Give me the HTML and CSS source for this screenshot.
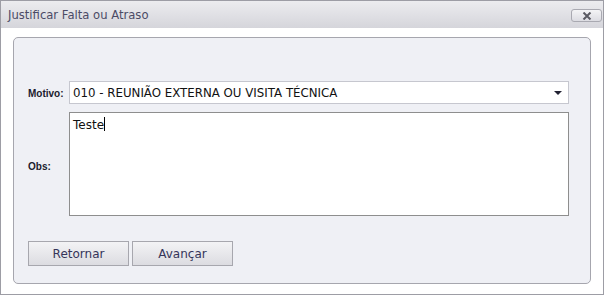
FILE: index.html
```html
<!DOCTYPE html>
<html lang="pt">
<head>
  <meta charset="UTF-8">
  <title>Justificar Falta ou Atraso</title>
  <link rel="stylesheet" href="styles.css">
</head>
<body>
  <div class="window">
    <div class="title-bar">
      <span class="title">Justificar Falta ou Atraso</span>
      <button class="close-btn" title="Fechar">
        <svg width="10" height="8" viewBox="0 0 10 8">
          <path d="M1.5 0.5 L8.5 7.5 M8.5 0.5 L1.5 7.5" stroke="#5a5a62" stroke-width="2" fill="none"/>
        </svg>
      </button>
    </div>

    <div class="window-body">
      <div class="panel">
        <div class="form">
          <label class="field-label">Motivo:</label>
          <div class="combo">
            <span class="combo-text">010 - REUNIÃO EXTERNA OU VISITA TÉCNICA</span>
            <span class="combo-arrow"></span>
          </div>

          <label class="field-label obs-label">Obs:</label>
          <div class="memo">Teste<span class="caret"></span></div>
        </div>

        <div class="actions">
          <button class="btn">Retornar</button>
          <button class="btn">Avançar</button>
        </div>
      </div>
    </div>
  </div>
</body>
</html>
```

FILE: styles.css
```css
body {
  margin: 0;
  padding: 0;
  background-color: #ffffff;
  font-family: 'DejaVu Sans', Verdana, sans-serif;
}

.window {
  width: 604px;
  height: 295px;
  box-sizing: border-box;
  border: 1px solid #9d9da5;
  background-color: #ffffff;
  display: flex;
  flex-direction: column;
}

.title-bar {
  height: 27px;
  display: flex;
  justify-content: space-between;
  align-items: center;
  padding: 0 1px 0 7px;
  background: linear-gradient(#ececef, #d5d5db);
}

.title {
  font-size: 11.6px;
  color: #4b4b66;
}

.close-btn {
  width: 31px;
  height: 13px;
  padding: 0;
  margin-top: 2px;
  border: 1px solid #a9a9b1;
  border-radius: 3px;
  background: linear-gradient(#f4f4f6, #dcdce2);
  display: flex;
  justify-content: center;
  align-items: center;
}

.window-body {
  flex: 1;
  padding: 9px 12px 10px 12px;
}

.panel {
  height: 100%;
  box-sizing: border-box;
  border: 1px solid #a6a6ae;
  border-radius: 5px;
  background-color: #eff0f5;
}

.form {
  display: grid;
  grid-template-columns: 41px 500px;
  column-gap: 0;
  row-gap: 8px;
  padding: 43px 0 0 14px;
  align-items: center;
}

.field-label {
  font-family: 'Liberation Sans', Arial, sans-serif;
  font-size: 10px;
  font-weight: bold;
  color: #1b1b2e;
  padding-top: 2px;
}

.obs-label {
  padding-top: 4px;
}

.combo {
  height: 23px;
  box-sizing: border-box;
  border: 1px solid #c6c7cf;
  background-color: #ffffff;
  display: flex;
  align-items: center;
  justify-content: space-between;
  padding: 0 6px 0 3px;
}

.combo-text {
  font-size: 11.8px;
  color: #111111;
}

.combo-arrow {
  width: 0;
  height: 0;
  border-left: 4px solid transparent;
  border-right: 4px solid transparent;
  border-top: 4px solid #222233;
}

.memo {
  height: 104px;
  box-sizing: border-box;
  border: 1px solid #8e8e8e;
  background-color: #ffffff;
  padding: 4px 3px;
  font-size: 12px;
  color: #111111;
}

.caret {
  display: inline-block;
  width: 1px;
  height: 14px;
  background-color: #000000;
  vertical-align: -2px;
}

.actions {
  display: flex;
  gap: 3px;
  padding: 25px 0 0 14px;
}

.btn {
  width: 101px;
  height: 25px;
  border: 1px solid #a7a7ae;
  background: linear-gradient(#f3f3f5, #dcdce1);
  font-family: 'DejaVu Sans', Verdana, sans-serif;
  font-size: 12px;
  color: #35355a;
  padding: 0;
}
```
